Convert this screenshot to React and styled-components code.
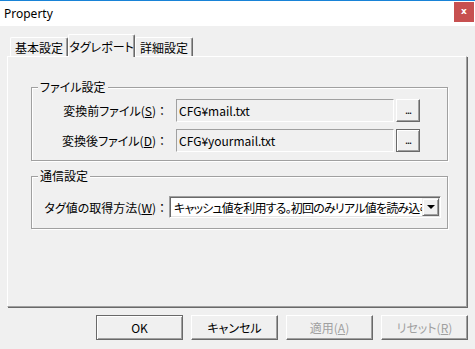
import React from 'react';
import styled, { createGlobalStyle } from 'styled-components';

const FONT = `"Noto Sans CJK JP", "Noto Sans", sans-serif`;

const Global = createGlobalStyle`
  html, body { margin: 0; padding: 0; background: #f0f0f0; }
  body { font-family: ${FONT}; font-size: 12px; color: #000; }
  * { box-sizing: border-box; }
`;

const Window = styled.div`
  width: 475px;
  height: 349px;
  display: flex;
  flex-direction: column;
  background: #f0f0f0;
  overflow: hidden;
  font-family: ${FONT};
  font-size: 12px;
  font-feature-settings: "palt" 1;
`;

const TitleBar = styled.div`
  height: 26px;
  border-top: 1px solid #1883d7;
  background: #fff;
  display: flex;
  align-items: center;
  justify-content: space-between;
  padding: 0 1px 0 4px;
`;

const Title = styled.span`
  font-family: "Noto Sans", sans-serif;
  font-size: 12px;
  color: #000;
`;

const CloseBox = styled.div`
  align-self: flex-start;
  margin-top: 1px;
  width: 20px;
  height: 20px;
  background: #c75050;
  color: #fff;
  display: flex;
  align-items: center;
  justify-content: center;
  font-family: "DejaVu Sans", sans-serif;
  font-weight: bold;
  font-size: 9px;
  line-height: 1;
  padding-bottom: 1px;
`;

const Body = styled.div`
  flex: 1;
  display: flex;
  flex-direction: column;
  padding: 8px 7px 0 7px;
`;

const TabRow = styled.div`
  display: flex;
  align-items: flex-end;
  height: 22px;
  padding-left: 3px;
`;

const Tab = styled.div`
  width: ${p => p.$w}px;
  height: ${p => (p.$active ? 23 : 19)}px;
  margin-bottom: ${p => (p.$active ? -1 : 0)}px;
  position: ${p => (p.$active ? 'relative' : 'static')};
  z-index: ${p => (p.$active ? 1 : 0)};
  background: #f0f0f0;
  border-top: 1px solid #fff;
  border-left: 1px solid #fff;
  border-right: 1px solid #696969;
  box-shadow: inset -1px 0 0 #a0a0a0;
  border-radius: 2px 2px 0 0;
  display: flex;
  align-items: center;
  justify-content: center;
  padding-top: ${p => (p.$active ? 0 : 1)}px;
  white-space: nowrap;
`;

const Panel = styled.div`
  width: 460px;
  height: 251px;
  border-top: 1px solid #fff;
  border-left: 1px solid #fff;
  border-right: 1px solid #a0a0a0;
  border-bottom: 1px solid #a0a0a0;
  box-shadow: 1px 1px 0 #696969;
  padding: 22px 0 0 23px;
  display: flex;
  flex-direction: column;
  gap: 7px;
`;

const Group = styled.fieldset`
  width: 417px;
  margin: 0;
  padding: ${p => p.$pad};
  border: 1px solid #a0a0a0;
  box-shadow: 1px 1px 0 #fff, inset 1px 1px 0 #fff;
  display: flex;
  flex-direction: column;
  gap: 7px;
`;

const Legend = styled.legend`
  margin-left: 6px;
  padding: 0 2px;
  line-height: 16px;
  background: #f0f0f0;
`;

const Row = styled.div`
  display: flex;
  align-items: center;
`;

const Label = styled.span`
  width: 136px;
  text-align: right;
  white-space: nowrap;
  margin-right: ${p => p.$gap}px;
`;

const Colon = styled.span`
  font-feature-settings: normal;
`;

const U = styled.span`
  text-decoration: underline;
  text-underline-offset: 1px;
`;

const Field = styled.div`
  width: 218px;
  height: 23px;
  border-top: 1px solid #a0a0a0;
  border-left: 1px solid #a0a0a0;
  border-right: 1px solid #fff;
  border-bottom: 1px solid #fff;
  background: #f0f0f0;
  padding-left: 2px;
  display: flex;
  align-items: center;
  white-space: nowrap;
`;

const SmallButton = styled.div`
  width: 24px;
  height: 23px;
  margin-left: 2px;
  background: #f0f0f0;
  border: 1px solid;
  border-color: ${p => (p.$focus ? '#696969' : '#fff #696969 #696969 #fff')};
  box-shadow: ${p =>
    p.$focus
      ? 'inset 1px 1px 0 #fff, inset -1px -1px 0 #a0a0a0'
      : 'inset -1px -1px 0 #a0a0a0'};
  display: flex;
  align-items: center;
  justify-content: center;
  font-size: 11px;
  padding-bottom: 3px;
  letter-spacing: -1px;
`;

const Combo = styled.div`
  width: 272px;
  height: 22px;
  background: #fff;
  border-top: 1px solid #a0a0a0;
  border-left: 1px solid #a0a0a0;
  border-right: 1px solid #fff;
  border-bottom: 1px solid #fff;
  box-shadow: inset 1px 1px 0 #696969, inset -1px -1px 0 #e3e3e3;
  display: flex;
  align-items: stretch;
  padding: 1px;
`;

const ComboText = styled.div`
  flex: 1;
  overflow: hidden;
  white-space: nowrap;
  padding-left: 3px;
  letter-spacing: -0.8px;
  display: flex;
  align-items: center;
`;

const DropButton = styled.div`
  width: 17px;
  background: #f0f0f0;
  border: 1px solid;
  border-color: #f0f0f0 #696969 #696969 #f0f0f0;
  box-shadow: inset 1px 1px 0 #fff, inset -1px -1px 0 #a0a0a0;
  display: flex;
  align-items: center;
  justify-content: center;
`;

const Arrow = styled.div`
  width: 0;
  height: 0;
  border-left: 4px solid transparent;
  border-right: 4px solid transparent;
  border-top: 4px solid #000;
`;

const ButtonRow = styled.div`
  display: flex;
  justify-content: flex-end;
  gap: 8px;
  margin-top: 8px;
`;

const Button = styled.div`
  width: 87px;
  height: 25px;
  background: #f0f0f0;
  border: 1px solid;
  border-color: ${p => (p.$default ? '#696969' : '#fff #696969 #696969 #fff')};
  box-shadow: ${p =>
    p.$default
      ? 'inset 1px 1px 0 #fff, inset -1px -1px 0 #a0a0a0'
      : 'inset -1px -1px 0 #a0a0a0'};
  color: ${p => (p.$disabled ? '#a0a0a0' : '#000')};
  display: flex;
  align-items: center;
  justify-content: center;
  white-space: nowrap;
`;

export default function App() {
  return (
    <>
      <Global />
      <Window>
        <TitleBar>
          <Title>Property</Title>
          <CloseBox>x</CloseBox>
        </TitleBar>
        <Body>
          <TabRow>
            <Tab $w={58}>基本設定</Tab>
            <Tab $w={67} $active>タグレポート</Tab>
            <Tab $w={58}>詳細設定</Tab>
          </TabRow>
          <Panel>
            <Group $pad="4px 0 8px 0">
              <Legend>ファイル設定</Legend>
              <Row>
                <Label $gap={8}>
                  変換前ファイル(<U>S</U>)<Colon>：</Colon>
                </Label>
                <Field>CFG¥mail.txt</Field>
                <SmallButton>...</SmallButton>
              </Row>
              <Row>
                <Label $gap={8}>
                  変換後ファイル(<U>D</U>)<Colon>：</Colon>
                </Label>
                <Field>CFG¥yourmail.txt</Field>
                <SmallButton $focus>...</SmallButton>
              </Row>
            </Group>
            <Group $pad="12px 0 10px 0">
              <Legend>通信設定</Legend>
              <Row>
                <Label $gap={1}>
                  タグ値の取得方法(<U>W</U>)<Colon>：</Colon>
                </Label>
                <Combo>
                  <ComboText>キャッシュ値を利用する。初回のみリアル値を読み込む</ComboText>
                  <DropButton>
                    <Arrow />
                  </DropButton>
                </Combo>
              </Row>
            </Group>
          </Panel>
          <ButtonRow>
            <Button $default>OK</Button>
            <Button>キャンセル</Button>
            <Button $disabled>
              適用(<U>A</U>)
            </Button>
            <Button $disabled>
              リセット(<U>R</U>)
            </Button>
          </ButtonRow>
        </Body>
      </Window>
    </>
  );
}
